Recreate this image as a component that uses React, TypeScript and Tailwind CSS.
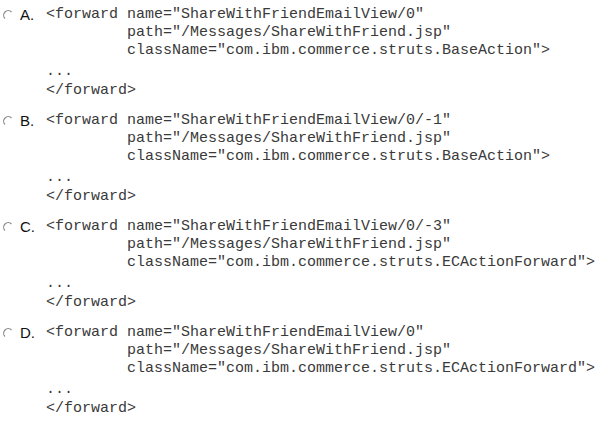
import React from "react";

type Option = {
  letter: string;
  name: string;
  className: string;
};

const options: Option[] = [
  { letter: "A", name: "ShareWithFriendEmailView/0", className: "com.ibm.commerce.struts.BaseAction" },
  { letter: "B", name: "ShareWithFriendEmailView/0/-1", className: "com.ibm.commerce.struts.BaseAction" },
  { letter: "C", name: "ShareWithFriendEmailView/0/-3", className: "com.ibm.commerce.struts.ECActionForward" },
  { letter: "D", name: "ShareWithFriendEmailView/0", className: "com.ibm.commerce.struts.ECActionForward" },
];

function Radio() {
  return (
    <svg width="10" height="10" viewBox="0 0 10 10" className="mt-[4px]">
      <path d="M2 8.5 A4 4 0 0 1 8.5 2" fill="none" stroke="#8a8a8a" strokeWidth="1.2" />
    </svg>
  );
}

function OptionBlock({ option }: { option: Option }) {
  return (
    <div className="flex items-start">
      <div className="w-[20px] pl-[3px] flex">
        <Radio />
      </div>
      <div className="w-[26px] text-[15px] leading-[18px] text-[#111] font-['Liberation_Sans',Arial,sans-serif]">
        {option.letter}.
      </div>
      <div className="font-['Liberation_Mono','Courier_New',monospace] text-[15px] leading-[18px] text-[#3a3a3a] whitespace-pre">
        <div>{`<forward name="${option.name}"`}</div>
        <div>{`         path="/Messages/ShareWithFriend.jsp"`}</div>
        <div>{`         className="${option.className}">`}</div>
        <div className="mt-[3px]">...</div>
        <div className="mt-[1px]">{`</forward>`}</div>
      </div>
    </div>
  );
}

export default function App() {
  return (
    <div className="w-[605px] h-[423px] bg-white pt-[6px] flex flex-col gap-[12px] overflow-hidden">
      {options.map((o) => (
        <OptionBlock key={o.letter} option={o} />
      ))}
    </div>
  );
}
